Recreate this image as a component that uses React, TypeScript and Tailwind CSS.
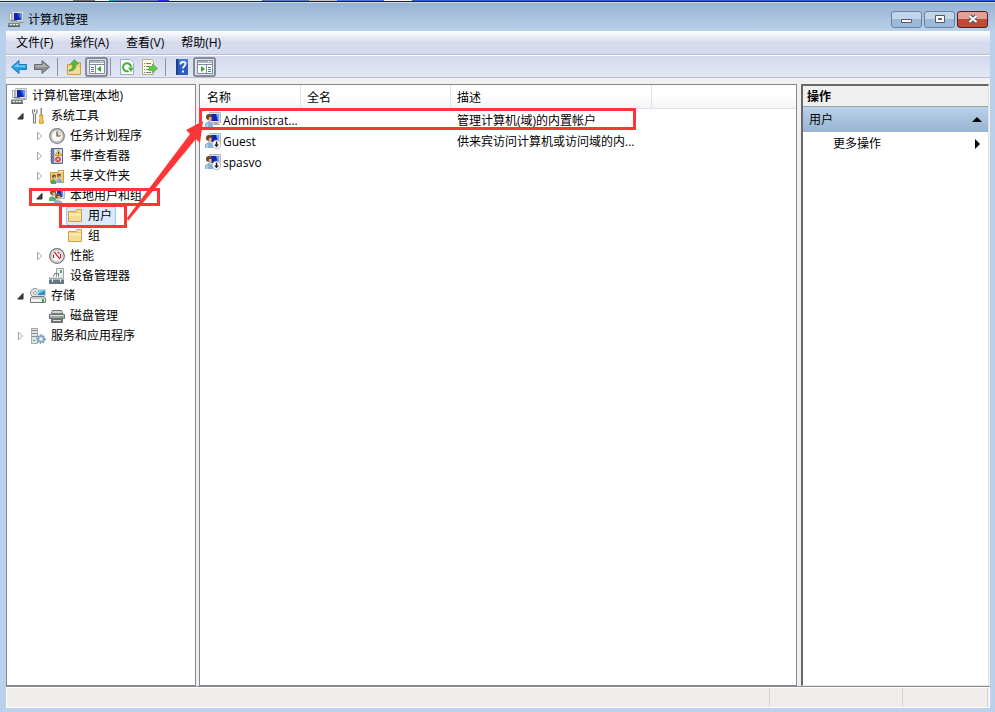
import React from 'react';

const cjk = "font-['Open_Sans','Noto_Sans_CJK_SC',sans-serif]";

function Svg({ children }: { children: React.ReactNode }) {
  return (
    <svg width="16" height="16" viewBox="0 0 16 16" className="shrink-0" aria-hidden="true">
      {children}
    </svg>
  );
}

function ComputerIcon() {
  return (
    <Svg>
      <path d="M4.500.500h11v10h-11z" fill="#dfe2e4" stroke="#b4b9bd" />
      <path d="M6 2h8v7H6z" fill="#0b1fb4" />
      <path d="M11 2h3v7h-1z" fill="#5d8df0" />
      <path d="M9 2h2l2 7h-1z" fill="#2f55d8" />
      <path d="M12 11h3l1 1h-4z" fill="#8f969b" />
      <path d="M1 2h3v8H1z" fill="#aab1b4" />
      <path d="M2 3h1v6H2z" fill="#f1f3f3" />
      <path d="M3.500 10.500V9.500h5v1" fill="none" stroke="#6f787b" />
      <path d="M0 11h12v4H0z" fill="#7d8789" />
      <path d="M0 11h12v1H0z" fill="#b6bdbf" />
      <path d="M0 15h12v1H0z" fill="#596265" />
      <path d="M2 13h2v1H2zM5 13h2v1H5zM8 13h2v1H8z" fill="#eef1ea" />
    </Svg>
  );
}

function ToolsIcon() {
  return (
    <Svg>
      <path d="M2.500 1.500v3l1 2v8.500h2V6.500l1.500-2v-3M4.500 1v3" fill="#eceeef" stroke="#7d8386" strokeWidth="1.100" />
      <path d="M10.500 0h1.500v8h-1.500z" fill="#868b8e" />
      <path d="M9.500 7h3.500l-.5 3 1 4-1 2h-2.500l-1-2 1-4z" fill="#f5b120" stroke="#c4800f" strokeWidth=".6" />
      <path d="M10.500 8h1v7h-1z" fill="#fbd873" />
    </Svg>
  );
}

function ClockIcon() {
  return (
    <Svg>
      <circle cx="8" cy="8" r="7.300" fill="#e4e6e7" stroke="#74797e" strokeWidth="1.200" />
      <circle cx="8" cy="8" r="5.700" fill="#fdfaf0" stroke="#a9aeb2" strokeWidth=".8" />
      <path d="M8 8V3l4 1 1 4z" fill="#f5dca6" />
      <path d="M8 3.500V8h3.500" fill="none" stroke="#44506a" strokeWidth="1.200" />
    </Svg>
  );
}

function EventIcon() {
  return (
    <Svg>
      <path d="M2.500.500h11v15h-11z" fill="#b9c6dc" stroke="#566a8e" />
      <path d="M3 1h2v14H3z" fill="#6f82a5" />
      <path d="M6 2h7v12H6z" fill="#e3e8f0" />
      <path d="M1 3h3M1 6h3M1 9h3M1 12h3" stroke="#6b7a94" />
      <path d="M9.500 2l3.500 5.500H6z" fill="#f8d12f" stroke="#b48a10" strokeWidth=".7" />
      <path d="M9.500 4v2.500" stroke="#3c3000" />
      <circle cx="9" cy="11.300" r="2.900" fill="#d8433f" />
      <path d="M8 10.300l2 2M10 10.300l-2 2" stroke="#fff" strokeWidth=".9" />
    </Svg>
  );
}

function FolderIcon() {
  return (
    <Svg>
      <path d="M1.500 13.500V3.500h7l1.500-2h4.500v12z" fill="#ecc971" stroke="#cba148" />
      <path d="M10 2.500h4v1h-4z" fill="#fff8dc" />
      <path d="M2 5h12v8H2z" fill="#f6dc95" />
      <path d="M2 5h12v3H2z" fill="#fae7ae" />
    </Svg>
  );
}

function SharedIcon() {
  return (
    <Svg>
      <path d="M1.500 14.500V4.500h7l1-2h5v12z" fill="#efcf7d" stroke="#c3983d" />
      <path d="M10 3h4v1h-4z" fill="#fff3c8" />
      <circle cx="5" cy="8.500" r="2" fill="#6b4827" />
      <path d="M4.500 8.500h2v2h-2z" fill="#e0b488" />
      <circle cx="10" cy="7.500" r="2" fill="#6b4827" />
      <path d="M9.500 7.500h2v2h-2z" fill="#e0b488" />
      <path d="M2 16v-3l2-2 3 2v3z" fill="#4da566" />
      <path d="M7.500 15v-3l2.500-2 3 2v3z" fill="#86aed2" />
    </Svg>
  );
}

function UserGroupIcon() {
  return (
    <Svg>
      <path d="M6.500 1.500h9v9h-9z" fill="#dfe2e4" stroke="#b4b9bd" />
      <path d="M8 3h6v6H8z" fill="#142bbd" />
      <path d="M12 3h2v6h-1z" fill="#6b98ec" />
      <circle cx="4" cy="4.500" r="2.900" fill="#7a5330" />
      <path d="M3.500 4.500H6V8H3.500z" fill="#dfb389" />
      <path d="M0 13v-3l3-2 4 2v3z" fill="#5fb072" />
      <circle cx="9" cy="8" r="2.800" fill="#7a5330" />
      <path d="M8.500 8H11v3.500H8.500z" fill="#dfb389" />
      <path d="M5 16v-2.500l3-2 5 2V16z" fill="#8fb6da" />
    </Svg>
  );
}

function PerformanceIcon() {
  return (
    <Svg>
      <circle cx="8" cy="8" r="7.300" fill="#fff" stroke="#6c7173" strokeWidth="1.200" />
      <circle cx="8" cy="8" r="5.600" fill="none" stroke="#c0c4c6" />
      <path d="M4.500 4l6 7.500 1-.8-5.500-7z" fill="#cf1f24" />
      <path d="M4.500 10V6.500M11.500 10V6M8.500 4l2 1.500" stroke="#b81f25" strokeWidth="1.200" />
    </Svg>
  );
}

function DeviceIcon() {
  return (
    <Svg>
      <path d="M7.500.500h7v9h-7z" fill="#eceeef" stroke="#9aa1a5" />
      <path d="M11 2h2v3h-2z" fill="#43b649" />
      <path d="M4.500 8.500l1-3h4v3" fill="none" stroke="#6e7c86" />
      <path d="M0 9h15v3H0z" fill="#a2b0ba" />
      <path d="M0 12h15v4H0z" fill="#657784" />
      <path d="M1 9h13v1H1z" fill="#d1dae0" />
      <path d="M3 11h1v3H3zM11 11h1v3h-1z" fill="#e7edf0" />
    </Svg>
  );
}

function StorageIcon() {
  return (
    <Svg>
      <circle cx="5" cy="5" r="4.500" fill="#dfe4e0" stroke="#838a8b" strokeWidth=".9" />
      <circle cx="5" cy="5" r="1.500" fill="#fff" stroke="#838a8b" strokeWidth=".7" />
      <path d="M7.500 1.500h8v6h-8z" fill="#2e93cc" stroke="#d3dade" />
      <path d="M8 2h7L8 6z" fill="#86cdec" />
      <path d="M.500 14.500v-4l1.500-2h12l1.500 2v4z" fill="#c9cccd" stroke="#737879" />
      <path d="M1 11h14v3H1z" fill="#f1f2f2" />
      <path d="M12 11h2v3h-2z" fill="#32b43a" />
    </Svg>
  );
}

function DiskIcon() {
  return (
    <Svg>
      <path d="M1.500 7.500l2-5h9l2 5z" fill="#d3d6d6" stroke="#6c7171" />
      <path d="M3 5h10v1H3z" fill="#7b8080" />
      <path d="M.500 6.500h15v4H.500z" fill="#a3a7a7" stroke="#6c7171" />
      <path d="M1 7h14v1H1z" fill="#e2e4e4" />
      <path d="M12 8h2v2h-2z" fill="#52c553" />
      <path d="M2 11h12v4H2z" fill="#6b7070" />
      <path d="M4 12h8v1H4z" fill="#e0e2e2" />
    </Svg>
  );
}

function ServicesIcon() {
  return (
    <Svg>
      <path d="M1.500.500h6v15h-6z" fill="#dfe3e5" stroke="#a2a9ad" />
      <path d="M2 2.500h5M2 5.500h5M2 8.500h5" stroke="#858d91" />
      <path d="M3 12h2v1H3z" fill="#3bb347" />
      <circle cx="11" cy="11" r="3.700" fill="#b4cde4" stroke="#7397ba" strokeWidth="2" strokeDasharray="1.600 1.100" />
      <circle cx="11" cy="11" r="2.700" fill="#b4cde4" stroke="#7397ba" strokeWidth=".6" />
      <circle cx="11" cy="11" r="1.200" fill="#fff" />
    </Svg>
  );
}

function UserIcon({ disabled = false }: { disabled?: boolean }) {
  return (
    <Svg>
      <path d="M4.500.500h11v10h-11z" fill="#dfe2e4" stroke="#b4b9bd" />
      <path d="M6 2h8v7H6z" fill="#1126b8" />
      <path d="M11 2h3v7h-1z" fill="#6d9bf0" />
      <path d="M9 11h4l2 2H8z" fill="#a0a7ab" />
      <circle cx="4" cy="5" r="3" fill="#6d4725" />
      <path d="M4 5h2.500v4H3.500z" fill="#e0b389" />
      <path d="M0 15v-3.500L3.500 9 8 11.500V15z" fill="#86b2d9" />
      <path d="M1 15v-3l2-1v4z" fill="#acd0ec" />
      {disabled && (
        <>
          <circle cx="11.500" cy="11.300" r="4.200" fill="#fff" stroke="#8e9396" strokeWidth=".7" />
          <path d="M10.800 8.500h1.500v3h1.700l-2.500 2.800L9 11.500h1.800z" fill="#1c1c1c" />
        </>
      )}
    </Svg>
  );
}

function PanelIcon({ right = false }: { right?: boolean }) {
  return (
    <Svg>
      <path d="M.5 1.500h15v13H.5z" fill="#fff" stroke="#858b96" />
      <path d="M1 2h14v2H1z" fill="#aab2c0" />
      <path d="M11 2.500h1M13 2.500h1" stroke="#fff" />
      <path d="M0 5.500h16" stroke="#858b96" />
      <path d={right ? 'M9.500 6v8' : 'M6.500 6v8'} stroke="#858b96" />
      <path d={right ? 'M11 8.500h3M11 10.500h3M11 12.500h3' : 'M2 8.500h3M2 10.500h3M2 12.500h3'} stroke="#4974b5" />
      <path d={right ? 'M4 7l4 3-4 3z' : 'M12 7l-4 3 4 3z'} fill="#2fa536" />
    </Svg>
  );
}

function ArrowIcon({ forward = false }: { forward?: boolean }) {
  return (
    <Svg>
      {forward ? (
        <>
          <path d="M.5 5.500H8v-4L15.500 8 8 14.500v-4H.5z" fill="#8f9193" stroke="#696b6e" />
          <path d="M1.500 6.500H9V4l4 4H1.500z" fill="#b4b6b8" />
        </>
      ) : (
        <>
          <path d="M15.500 5.500H8v-4L.5 8 8 14.500v-4h7.500z" fill="#27a0e4" stroke="#2178b8" />
          <path d="M14.500 6.500H7V4L3 8h11.500z" fill="#74cbf6" />
        </>
      )}
    </Svg>
  );
}

function UpIcon() {
  return (
    <Svg>
      <path d="M1.500 15.500v-10h6l1-2h6v12z" fill="#f0d07c" stroke="#c99d47" />
      <path d="M2 8h12v7H2z" fill="#f5dc96" />
      <path d="M3 11c3 0 4-3 4-6H4.500L8.500.500l4 4.500H10c0 5-2 7-7 7z" fill="#52c03a" stroke="#2f9124" strokeWidth=".6" />
    </Svg>
  );
}

function RefreshIcon() {
  return (
    <Svg>
      <path d="M1.500.500h10l3 3v12h-13z" fill="#fff" stroke="#a3acb6" />
      <path d="M9.500 12A4 4 0 1 1 12 8" fill="none" stroke="#3db236" strokeWidth="2" />
      <path d="M9 8.500h5.500L12 13z" fill="#3db236" />
    </Svg>
  );
}

function ExportIcon() {
  return (
    <Svg>
      <path d="M.500.500h9l2 2v13h-11z" fill="#fffbe4" stroke="#b3ae8e" />
      <path d="M2 4.500h1M4 4.500h5M2 7.500h1M4 7.500h3M2 10.500h1M4 10.500h3M2 13.500h1M4 13.500h5" stroke="#6f7c84" />
      <path d="M7 7.500h3.500V5l5 4.500-5 4.500v-2.500H7z" fill="#62c845" stroke="#3f9e2e" strokeWidth=".6" />
    </Svg>
  );
}

function HelpIcon() {
  return (
    <Svg>
      <path d="M2 0h12v16H2z" fill="#2c5cc0" />
      <path d="M2 0h2v16H2z" fill="#1c3f92" />
      <path d="M5 0h9v5H5z" fill="#4677d4" />
      <path d="M6.500 5.500c0-3.500 5-3.500 5-.5 0 2-2.500 2-2.500 4.500" fill="none" stroke="#fff" strokeWidth="1.800" />
      <path d="M8 11.500h2v2H8z" fill="#fff" />
    </Svg>
  );
}

type Node = { label: string; icon: React.ReactNode; level: 0 | 1 | 2 | 3; state?: 'open' | 'closed'; selected?: boolean };

const nodes: Node[] = [
  { label: '计算机管理(本地)', icon: <ComputerIcon />, level: 0 },
  { label: '系统工具', icon: <ToolsIcon />, level: 1, state: 'open' },
  { label: '任务计划程序', icon: <ClockIcon />, level: 2, state: 'closed' },
  { label: '事件查看器', icon: <EventIcon />, level: 2, state: 'closed' },
  { label: '共享文件夹', icon: <SharedIcon />, level: 2, state: 'closed' },
  { label: '本地用户和组', icon: <UserGroupIcon />, level: 2, state: 'open' },
  { label: '用户', icon: <FolderIcon />, level: 3, selected: true },
  { label: '组', icon: <FolderIcon />, level: 3 },
  { label: '性能', icon: <PerformanceIcon />, level: 2, state: 'closed' },
  { label: '设备管理器', icon: <DeviceIcon />, level: 2 },
  { label: '存储', icon: <StorageIcon />, level: 1, state: 'open' },
  { label: '磁盘管理', icon: <DiskIcon />, level: 2 },
  { label: '服务和应用程序', icon: <ServicesIcon />, level: 1, state: 'closed' },
];

const indent = ['', 'pl-1', 'pl-[23px]', 'pl-10'];

function TreeRow({ node }: { node: Node }) {
  return (
    <li className={`flex h-5 items-center ${indent[node.level]}`}>
      {node.level > 0 && (
        <span className="flex w-[15px] shrink-0 items-center pl-0.5">
          {node.state && (
            <svg width="8" height="10" viewBox="0 0 8 10" aria-hidden="true">
              {node.state === 'open' ? (
                <path d="M6 2.500v5.500H.800z" fill="#404040" stroke="#222" />
              ) : (
                <path d="M1.500 1l4 4-4 4z" fill="#fff" stroke="#a6a6a6" />
              )}
            </svg>
          )}
        </span>
      )}
      <button
        className={`flex h-5 items-center gap-[5px] whitespace-nowrap pr-1 ${
          node.selected ? 'rounded-sm bg-[#dcebfc] pl-px outline outline-[#9fc5f0] -outline-offset-1' : ''
        } ${node.level === 3 && !node.selected ? 'pl-px' : ''}`}
      >
        {node.icon}
        <span>{node.label}</span>
      </button>
    </li>
  );
}

const users = [
  { name: 'Administrat...', desc: '管理计算机(域)的内置帐户', disabled: false },
  { name: 'Guest', desc: '供来宾访问计算机或访问域的内...', disabled: true },
  { name: 'spasvo', desc: '', disabled: true },
];

const th = 'border-r border-[#dfe3e8] bg-linear-to-b from-white from-40% to-[#f4f5f7] pt-0.5 text-left font-normal';

function Separator() {
  return <span className="mx-1 h-[18px] w-px bg-[#8d93a5]" />;
}

const tool = 'flex h-5 w-[23px] items-center justify-center';
const pressed = 'flex h-5 w-[23px] items-center justify-center rounded-[3px] border-2 border-[#858b99] bg-[#dfe3ee]';
const caption = 'flex h-[17px] w-[31px] items-center justify-center rounded-[3px] border bg-linear-to-b from-50% to-50%';
const captionBlue = 'border-[#6a83a2] from-[#c3d5e9] to-[#9bb9d8]';

const desktop = [
  'w-[73px] bg-[#d9f1f1]',
  'w-[22px] bg-[#77777a]',
  'w-[14px] bg-[#f2fafa]',
  'w-[6px] bg-[#08b5b5]',
  'w-[43px] bg-[#5c7fc6]',
  'w-[11px] bg-[#2433f5]',
  'w-[93px] bg-[#dcf3f3]',
  'w-[47px] bg-[#567dcb]',
  'w-[28px] bg-[#c3c3c3]',
  'w-[47px] bg-[#4a7ad8]',
  'w-[28px] bg-[#f4f4f4]',
  'grow bg-[#2f62d8]',
];

export default function App() {
  return (
    <div className={`relative flex h-screen flex-col overflow-hidden bg-[#b9d1ea] pr-[5px] pb-1 pl-1.5 text-xs text-black ${cjk}`}>
      <div className="-mr-[5px] -ml-1.5 flex h-0.5 shrink-0 border-b border-[#20252c]">
        {desktop.map((c) => <span key={c} className={c} />)}
      </div>
      <header className="-mr-[5px] -ml-1.5 flex h-[29px] shrink-0 items-center border-t border-[#c9dbee] bg-linear-to-b from-[#98b3d1] to-[#b9d1ea] pt-1 pr-[7px] pl-2">
        <ComputerIcon />
        <h1 className="ml-1 grow pt-0.5">计算机管理</h1>
        <div className="flex gap-0.5">
          <button aria-label="最小化" className={`${caption} ${captionBlue}`}>
            <svg width="12" height="12"><path d="M.5 6.500h10v3H.5z" fill="#fff" stroke="#535666" /></svg>
          </button>
          <button aria-label="最大化" className={`${caption} ${captionBlue}`}>
            <svg width="12" height="12"><path d="M1.500 2.500h9v7h-9zM4.500 5.500h3v1h-3z" fill="#fff" stroke="#535666" /></svg>
          </button>
          <button aria-label="关闭" className={`${caption} border-[#531c20] from-[#e1a196] to-[#bd4b36]`}>
            <svg width="14" height="12"><path d="M4 3l6 6M10 3l-6 6" stroke="#535666" strokeWidth="4" /><path d="M3.500 3l7 6M10.500 3l-7 6" stroke="#fff" strokeWidth="2" /></svg>
          </button>
        </div>
      </header>
      <main className="flex min-h-0 grow flex-col bg-[#f0f0f0]">
        <nav className="flex h-6 shrink-0 items-center gap-[17px] border-b border-[#b6bccc] bg-linear-to-b from-white via-[#d5daed] via-50% to-[#d5daed] pt-px pl-2.5">
          <button>文件(F)</button>
          <button>操作(A)</button>
          <button>查看(V)</button>
          <button>帮助(H)</button>
        </nav>
        <div className="flex h-[23px] shrink-0 items-center border-t border-b border-t-white border-b-[#b6bccc] bg-linear-to-b from-[#d3d8ec] to-[#e3e8f6] pt-px pl-px">
          <button aria-label="后退" className={tool}><ArrowIcon /></button>
          <button aria-label="前进" className={tool}><ArrowIcon forward /></button>
          <Separator />
          <button aria-label="向上" className={tool}><UpIcon /></button>
          <button aria-label="显示控制台树" className={`${pressed} -mr-0.5`}><PanelIcon /></button>
          <Separator />
          <button aria-label="刷新" className={tool}><RefreshIcon /></button>
          <button aria-label="导出列表" className={tool}><ExportIcon /></button>
          <Separator />
          <button aria-label="帮助" className={tool}><HelpIcon /></button>
          <button aria-label="显示操作窗格" className={pressed}><PanelIcon right /></button>
        </div>
        <div className="mt-1.5 flex min-h-0 grow gap-[3px]">
          <aside className="w-[190px] shrink-0 border border-[#828790] bg-white pt-px pl-1">
            <ul>{nodes.map((n) => <TreeRow key={n.label} node={n} />)}</ul>
          </aside>
          <section className="grow border border-[#828790] bg-white">
            <table className="w-full table-fixed border-separate border-spacing-0">
              <thead>
                <tr className="h-6">
                  <th className={`w-[101px] border-b pl-[7px] ${th}`}>名称</th>
                  <th className={`w-[150px] border-b pl-1.5 ${th}`}>全名</th>
                  <th className={`w-[201px] border-b pl-1.5 ${th}`}>描述</th>
                  <th className="border-b border-[#dfe3e8] bg-linear-to-b from-white from-40% to-[#f4f5f7]" />
                </tr>
              </thead>
              <tbody>
                {users.map((u) => (
                  <tr key={u.name} className="h-[21px] whitespace-nowrap">
                    <td className="pl-[5px]">
                      <span className="flex items-center gap-0.5"><UserIcon disabled={u.disabled} /><span className="pt-0.5">{u.name}</span></span>
                    </td>
                    <td />
                    <td className="pt-0.5 pl-1.5">{u.desc}</td>
                    <td />
                  </tr>
                ))}
              </tbody>
            </table>
          </section>
          <aside className="mr-px ml-px w-[188px] shrink-0 border-t-2 border-r border-b border-l-2 border-t-[#696969] border-r-[#e3e3e3] border-b-[#e3e3e3] border-l-[#696969] bg-white">
            <h2 className="flex h-[21px] items-center border-b border-[#a0a0a0] bg-[#f0f0f0] pt-px pl-1 font-bold">操作</h2>
            <button className="flex h-[25px] w-full items-center justify-between bg-linear-to-b from-[#b9d1ea] to-[#99b4d1] px-1.5">
              用户
              <svg width="10" height="6"><path d="M5 0l5 5H0z" fill="#000" /></svg>
            </button>
            <button className="flex h-6 w-full items-center justify-between pr-[7px] pl-[30px]">
              更多操作
              <svg width="6" height="10"><path d="M0 0l5 5-5 5z" fill="#000" /></svg>
            </button>
          </aside>
        </div>
        <footer className="shrink-0 border-t border-[#8a8a90]">
          <div className="flex h-[21px] border border-white bg-[#f0edec]">
            <span className="grow border-r border-[#d7d5d4]" />
            <span className="w-[133px] border-r border-[#d7d5d4]" />
            <span className="w-[85px] border-r border-[#d7d5d4]" />
            <span className="w-px" />
          </div>
        </footer>
      </main>
      <svg className="pointer-events-none absolute top-0 left-0" width="640" height="240" aria-hidden="true">
        <path d="M30.500 189.500h128v15h-128zM60.500 205.500h65v21h-65zM200.500 109.500h434v19h-434z" fill="none" stroke="#fc3636" strokeWidth="3" />
        <path d="M127 218l63-84-4-4 17-9-3 22-4-4-68 82z" fill="#fc3636" />
      </svg>
    </div>
  );
}
